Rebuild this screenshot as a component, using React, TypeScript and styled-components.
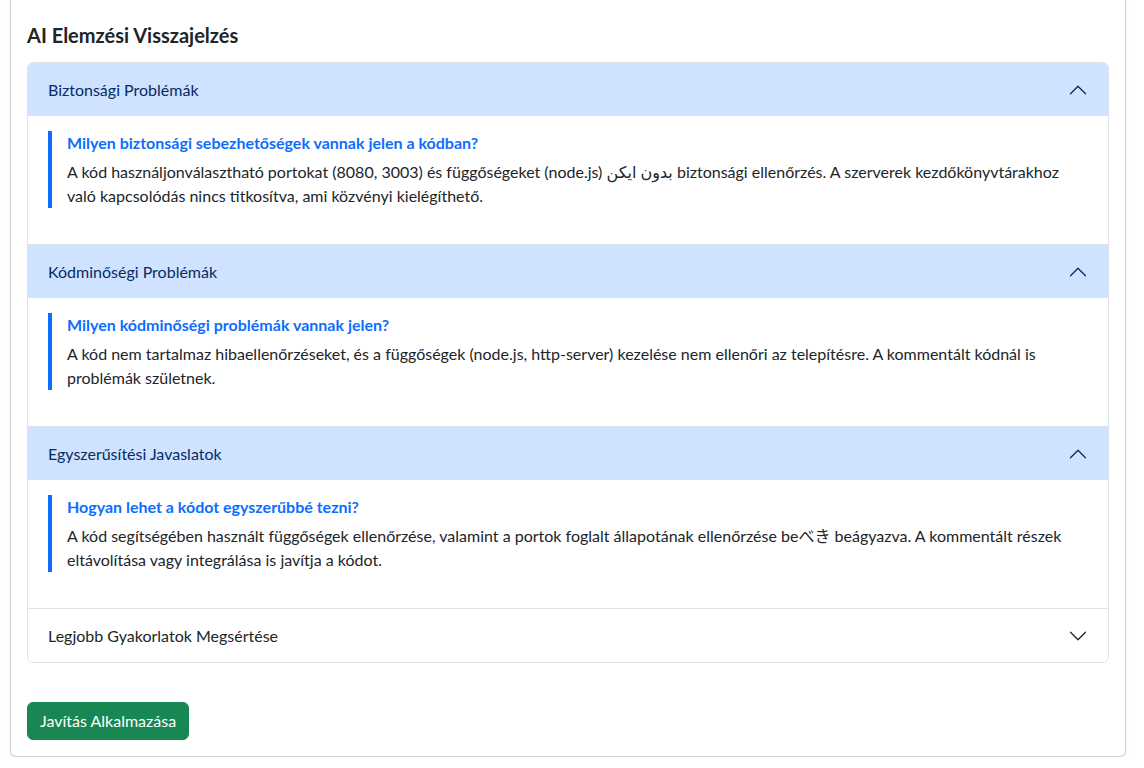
import React from "react";
import styled, { createGlobalStyle } from "styled-components";

const GlobalStyle = createGlobalStyle`
  html, body { margin: 0; padding: 0; background: #ffffff; }
  body {
    font-family: "Lato", "Noto Sans", "Noto Sans CJK JP", "DejaVu Sans", sans-serif;
    font-size: 16px;
    line-height: 1.5;
    color: #212529;
    overflow: hidden;
  }
  * { box-sizing: border-box; }
`;

const Page = styled.div`
  padding: 0 18px 0 10px;
`;

const Card = styled.section`
  margin-top: -10px;
  background: #fff;
  border: 1px solid rgba(0, 0, 0, 0.175);
  border-radius: 6px;
  box-shadow: 0 2px 4px rgba(0, 0, 0, 0.075);
`;

const CardBody = styled.div`
  padding: 32px 16px 16px;
`;

const Title = styled.h5`
  margin: 0 0 15px;
  font-size: 20px;
  font-weight: 700;
  line-height: 24px;
  color: #212529;
`;

const Accordion = styled.div`
  border: 1px solid #dee2e6;
  border-radius: 6px;
  overflow: hidden;
`;

const Item = styled.div`
  & + & { border-top: 1px solid #dee2e6; }
`;

const Header = styled.button<{ $open: boolean }>`
  display: flex;
  align-items: center;
  width: 100%;
  padding: 17px 20px 16px;
  border: 0;
  margin: 0;
  font: inherit;
  font-size: 16px;
  line-height: 20px;
  text-align: left;
  cursor: pointer;
  background: ${(p) => (p.$open ? "#cfe2ff" : "#ffffff")};
  color: ${(p) => (p.$open ? "#052c65" : "#212529")};
  box-shadow: ${(p) => (p.$open ? "inset 0 -1px 0 #dee2e6" : "none")};
`;

const HeaderLabel = styled.span`
  flex: 1;
`;

const Chevron = styled.svg<{ $open: boolean }>`
  width: 20px;
  height: 20px;
  flex-shrink: 0;
  transform: ${(p) => (p.$open ? "rotate(-180deg)" : "none")};
`;

const Body = styled.div`
  padding: 15px 20px 16px;
`;

const Quote = styled.blockquote`
  margin: 0 0 20px;
  padding-left: 15px;
  border-left: 4px solid #0d6efd;
`;

const Question = styled.h6`
  margin: 0 0 5px;
  font-size: 16px;
  font-weight: 700;
  line-height: 24px;
  color: #0d6efd;
`;

const Answer = styled.p`
  margin: 0;
  font-size: 16px;
  line-height: 24px;
  color: #212529;
`;

const Footer = styled.div`
  margin-top: 39px;
  display: flex;
`;

const ApplyButton = styled.button`
  font: inherit;
  font-size: 16px;
  line-height: 24px;
  padding: 6px 12px;
  border: 1px solid #198754;
  border-radius: 6px;
  background: #198754;
  color: #ffffff;
  cursor: pointer;
`;

type Section = { title: string; open: boolean; q?: string; a?: string };

const sections: Section[] = [
  {
    title: "Biztonsági Problémák",
    open: true,
    q: "Milyen biztonsági sebezhetőségek vannak jelen a kódban?",
    a: "A kód használjonválasztható portokat (8080, 3003) és függőségeket (node.js) بدون ایکن biztonsági ellenőrzés. A szerverek kezdőkönyvtárakhoz való kapcsolódás nincs titkosítva, ami közvényi kielégíthető.",
  },
  {
    title: "Kódminőségi Problémák",
    open: true,
    q: "Milyen kódminőségi problémák vannak jelen?",
    a: "A kód nem tartalmaz hibaellenőrzéseket, és a függőségek (node.js, http-server) kezelése nem ellenőri az telepítésre. A kommentált kódnál is problémák születnek.",
  },
  {
    title: "Egyszerűsítési Javaslatok",
    open: true,
    q: "Hogyan lehet a kódot egyszerűbbé tezni?",
    a: "A kód segítségében használt függőségek ellenőrzése, valamint a portok foglalt állapotának ellenőrzése beべき beágyazva. A kommentált részek eltávolítása vagy integrálása is javítja a kódot.",
  },
  { title: "Legjobb Gyakorlatok Megsértése", open: false },
];

function ChevronIcon({ open }: { open: boolean }) {
  return (
    <Chevron $open={open} viewBox="0 0 16 16" fill={open ? "#052c65" : "#212529"}>
      <path
        fillRule="evenodd"
        d="M1.646 4.646a.5.5 0 0 1 .708 0L8 10.293l5.646-5.647a.5.5 0 0 1 .708.708l-6 6a.5.5 0 0 1-.708 0l-6-6a.5.5 0 0 1 0-.708z"
      />
    </Chevron>
  );
}

export default function App() {
  return (
    <>
      <GlobalStyle />
      <Page>
        <Card>
          <CardBody>
            <Title>AI Elemzési Visszajelzés</Title>
            <Accordion>
              {sections.map((s) => (
                <Item key={s.title}>
                  <Header $open={s.open} type="button">
                    <HeaderLabel>{s.title}</HeaderLabel>
                    <ChevronIcon open={s.open} />
                  </Header>
                  {s.open && (
                    <Body>
                      <Quote>
                        <Question>{s.q}</Question>
                        <Answer>{s.a}</Answer>
                      </Quote>
                    </Body>
                  )}
                </Item>
              ))}
            </Accordion>
            <Footer>
              <ApplyButton type="button">Javítás Alkalmazása</ApplyButton>
            </Footer>
          </CardBody>
        </Card>
      </Page>
    </>
  );
}
